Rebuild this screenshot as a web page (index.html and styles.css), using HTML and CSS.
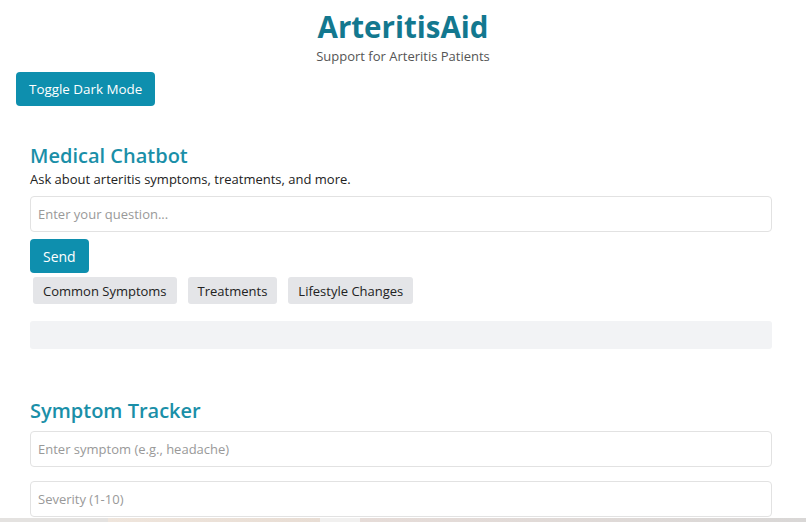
FILE: index.html
```html
<!DOCTYPE html>
<html lang="en">
<head>
<meta charset="utf-8">
<title>ArteritisAid</title>
<link rel="stylesheet" href="styles.css">
</head>
<body>
  <header class="site-header">
    <h1 class="brand">ArteritisAid</h1>
    <p class="tagline">Support for Arteritis Patients</p>
  </header>

  <button class="btn btn-primary toggle">Toggle Dark Mode</button>

  <main class="content">
    <section class="panel chatbot">
      <h2 class="panel-title">Medical Chatbot</h2>
      <p class="panel-desc">Ask about arteritis symptoms, treatments, and more.</p>
      <input class="field" type="text" placeholder="Enter your question...">
      <button class="btn btn-primary send">Send</button>
      <div class="chips">
        <button class="chip">Common Symptoms</button>
        <button class="chip">Treatments</button>
        <button class="chip">Lifestyle Changes</button>
      </div>
      <div class="chat-log"></div>
    </section>

    <section class="panel tracker">
      <h2 class="panel-title">Symptom Tracker</h2>
      <input class="field" type="text" placeholder="Enter symptom (e.g., headache)">
      <input class="field" type="text" placeholder="Severity (1-10)">
    </section>
  </main>

  <div class="banner-strip">
    <span class="strip-a"></span><span class="strip-b"></span><span class="strip-c"></span><span class="strip-d"></span>
  </div>
</body>
</html>
```

FILE: styles.css
```css
* { box-sizing: border-box; }

html, body { height: 100%; }

body {
  margin: 0;
  padding: 0 16px;
  font-family: "Open Sans", "Noto Sans", sans-serif;
  color: #222;
  background: #fff;
  overflow: hidden;
  position: relative;
}

.site-header {
  text-align: center;
  padding-top: 7px;
}

.brand {
  margin: 0;
  font-size: 29.5px;
  line-height: 40px;
  font-weight: 700;
  color: #13788f;
}

.tagline {
  margin: 0;
  font-size: 13px;
  line-height: 18px;
  color: #555;
}

.btn {
  font-family: inherit;
  border: none;
  border-radius: 4px;
  cursor: pointer;
}

.btn-primary {
  background: #0e8fae;
  color: #fff;
  font-size: 14px;
}

.toggle {
  margin-top: 7px;
  height: 34px;
  padding: 0 13px;
  font-size: 13.4px;
}

.content {
  padding: 0 18px 0 14px;
}

.panel { margin-top: 38px; }
.tracker { margin-top: 50px; }

.panel-title {
  margin: 0;
  font-size: 20px;
  line-height: 24px;
  font-weight: 600;
  color: #1a8fa8;
}

.panel-desc {
  margin: 2px 0 8px;
  font-size: 13px;
  line-height: 18px;
  color: #222;
}

.field {
  display: block;
  width: 100%;
  height: 36px;
  padding: 0 7px;
  font-family: inherit;
  font-size: 13px;
  color: #333;
  background: #fff;
  border: 1px solid #e2e2e2;
  border-radius: 4px;
}

.field::placeholder { color: #999; }

.tracker .field { margin-top: 8px; }
.tracker .field + .field { margin-top: 14px; }

.send {
  display: block;
  margin-top: 7px;
  height: 34px;
  padding: 0 13px;
}

.chips {
  display: flex;
  gap: 11px;
  margin: 4px 0 0 3px;
}

.chip {
  font-family: inherit;
  font-size: 13px;
  color: #222;
  background: #e4e5e8;
  border: none;
  border-radius: 3px;
  height: 27px;
  padding: 0 10px;
}

.chat-log {
  margin-top: 17px;
  height: 28px;
  background: #f2f3f5;
  border-radius: 3px;
}

.banner-strip {
  position: absolute;
  left: 0;
  right: 0;
  top: 518px;
  height: 4px;
  display: flex;
}

.strip-a { width: 108px; background: #e4e2e0; }
.strip-b { width: 212px; background: linear-gradient(90deg, #efe5dc, #e8ddd4); }
.strip-c { width: 40px; background: #f1f0ef; }
.strip-d { flex: 1; background: linear-gradient(90deg, #e6dcd8, #d9d7d6); }
```
